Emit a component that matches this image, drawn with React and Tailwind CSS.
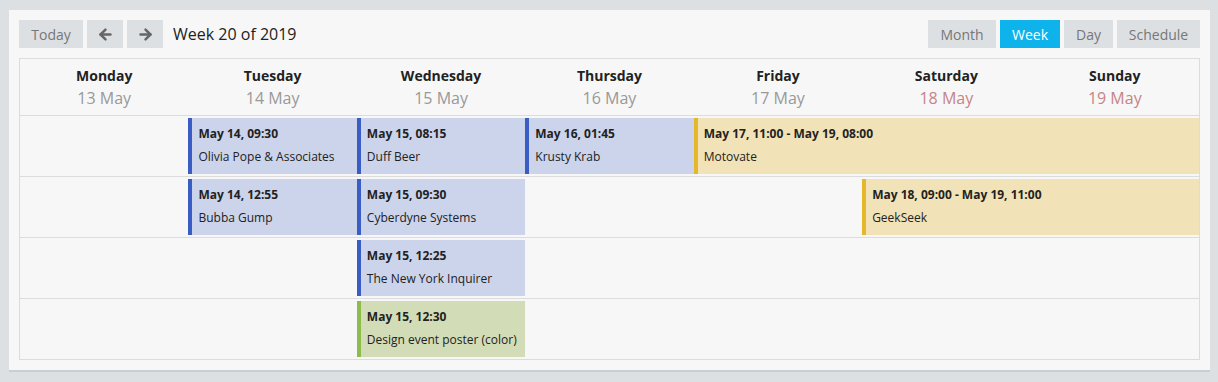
import { ArrowLeft, ArrowRight } from 'lucide-react';

const days = [
  { name: 'Monday', date: '13 May' },
  { name: 'Tuesday', date: '14 May' },
  { name: 'Wednesday', date: '15 May' },
  { name: 'Thursday', date: '16 May' },
  { name: 'Friday', date: '17 May' },
  { name: 'Saturday', date: '18 May', weekend: true },
  { name: 'Sunday', date: '19 May', weekend: true },
];

const tones = {
  blue: 'bg-[#cbd4ea] border-[#3a5cc5]',
  yellow: 'bg-[#f1e3b7] border-[#e5b82c]',
  green: 'bg-[#d2ddb8] border-[#8dbb4c]',
};

const rows = [
  [
    { col: 'col-start-2', span: 'col-span-1', when: 'May 14, 09:30', title: 'Olivia Pope & Associates', tone: 'blue' },
    { col: 'col-start-3', span: 'col-span-1', when: 'May 15, 08:15', title: 'Duff Beer', tone: 'blue' },
    { col: 'col-start-4', span: 'col-span-1', when: 'May 16, 01:45', title: 'Krusty Krab', tone: 'blue' },
    { col: 'col-start-5', span: 'col-span-3', when: 'May 17, 11:00 - May 19, 08:00', title: 'Motovate', tone: 'yellow' },
  ],
  [
    { col: 'col-start-2', span: 'col-span-1', when: 'May 14, 12:55', title: 'Bubba Gump', tone: 'blue' },
    { col: 'col-start-3', span: 'col-span-1', when: 'May 15, 09:30', title: 'Cyberdyne Systems', tone: 'blue' },
    { col: 'col-start-6', span: 'col-span-2', when: 'May 18, 09:00 - May 19, 11:00', title: 'GeekSeek', tone: 'yellow' },
  ],
  [
    { col: 'col-start-3', span: 'col-span-1', when: 'May 15, 12:25', title: 'The New York Inquirer', tone: 'blue' },
  ],
  [
    { col: 'col-start-3', span: 'col-span-1', when: 'May 15, 12:30', title: 'Design event poster (color)', tone: 'green' },
  ],
];

function Btn({ children, className = '', active }) {
  return (
    <button
      className={`h-[28px] flex items-center justify-center text-[14px] ${
        active ? 'bg-[#0db3ea] text-white' : 'bg-[#dde0e3] text-[#777]'
      } ${className}`}
    >
      {children}
    </button>
  );
}

export default function App() {
  return (
    <div className="min-h-[382px] bg-[#dde0e3] pt-[10px] font-['Open_Sans',sans-serif]">
      <div className="ml-[9px] w-[1201px] bg-[#f7f7f7] p-[10px] shadow-[0_2px_0_#c9ced3]">
        <div className="flex items-center justify-between">
          <div className="flex items-center gap-[4px]">
            <Btn className="w-[64px]">Today</Btn>
            <Btn className="w-[36px]"><ArrowLeft size={17} strokeWidth={3.5} color="#666" /></Btn>
            <Btn className="w-[36px]"><ArrowRight size={17} strokeWidth={3.5} color="#666" /></Btn>
            <span className="ml-[6px] text-[16px] text-[#222]">Week 20 of 2019</span>
          </div>
          <div className="flex items-center gap-[4px]">
            <Btn className="w-[68px]">Month</Btn>
            <Btn className="w-[60px]" active>Week</Btn>
            <Btn className="w-[49px]">Day</Btn>
            <Btn className="w-[83px]">Schedule</Btn>
          </div>
        </div>

        <div className="mt-[10px] border border-[#dcdcdc]">
          <div className="grid grid-cols-7 h-[56px]">
            {days.map((d) => (
              <div key={d.name} className="flex flex-col items-center pt-[7px]">
                <div className="text-[14px] font-bold leading-[20px] text-[#222]">{d.name}</div>
                <div className={`text-[16px] leading-[25px] ${d.weekend ? 'text-[#c58486]' : 'text-[#999]'}`}>
                  {d.date}
                </div>
              </div>
            ))}
          </div>
          {rows.map((row, i) => (
            <div key={i} className="grid grid-cols-7 border-t border-[#dcdcdc] py-[2px] h-[61px]">
              {row.map((ev) => (
                <div
                  key={ev.when}
                  className={`${ev.col} ${ev.span} row-start-1 h-[56px] border-l-4 pl-[6px] pt-[8px] ${tones[ev.tone]}`}
                >
                  <div className="text-[12px] font-bold leading-[16px] text-[#222]">{ev.when}</div>
                  <div className="mt-[7px] text-[12px] leading-[16px] text-[#222]">{ev.title}</div>
                </div>
              ))}
            </div>
          ))}
        </div>
      </div>
    </div>
  );
}
